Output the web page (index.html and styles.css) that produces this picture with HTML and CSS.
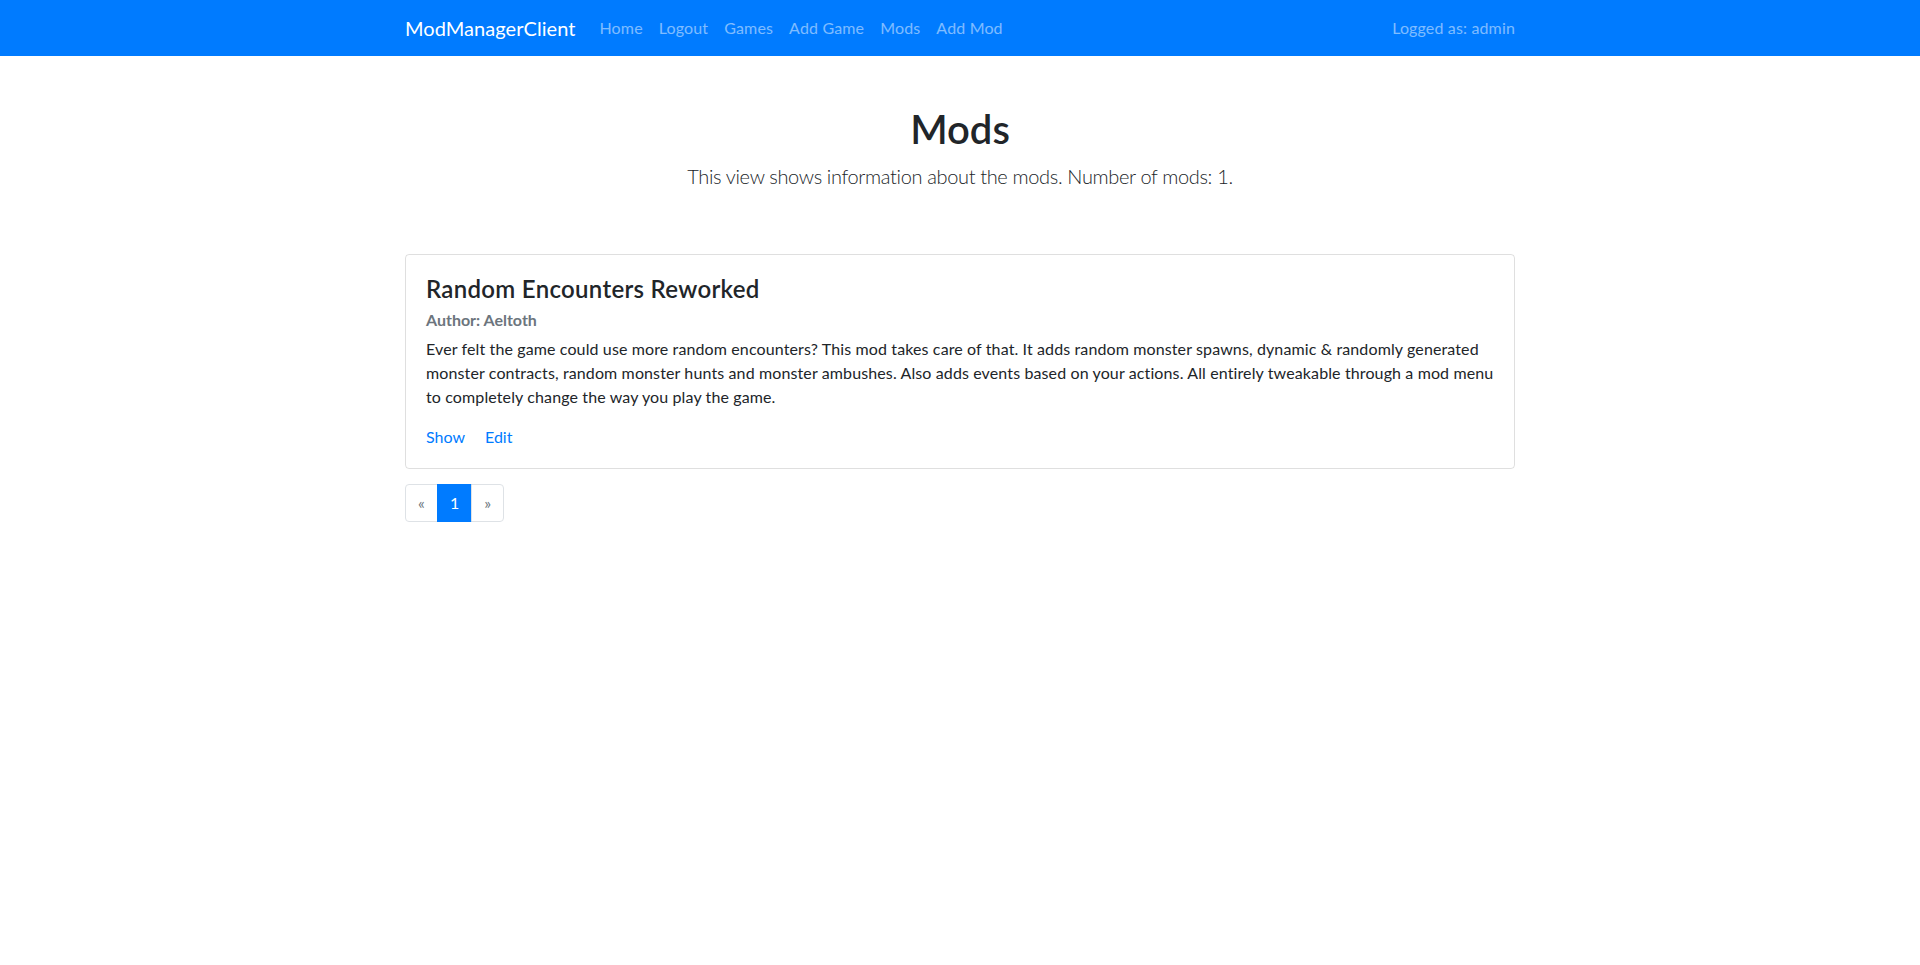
FILE: index.html
```html
<!DOCTYPE html>
<html lang="en">
<head>
<meta charset="utf-8">
<title>Mods - ModManagerClient</title>
<link rel="stylesheet" href="styles.css">
</head>
<body>
<nav class="navbar">
  <div class="container nav-inner">
    <a class="brand" href="#">ModManagerClient</a>
    <ul class="nav-links">
      <li><a href="#">Home</a></li>
      <li><a href="#">Logout</a></li>
      <li><a href="#">Games</a></li>
      <li><a href="#">Add Game</a></li>
      <li><a href="#">Mods</a></li>
      <li><a href="#">Add Mod</a></li>
    </ul>
    <span class="nav-text">Logged as: admin</span>
  </div>
</nav>
<main class="container">
  <header class="page-head">
    <h1 class="page-title">Mods</h1>
    <p class="lead">This view shows information about the mods. Number of mods: 1.</p>
  </header>
  <div class="card">
    <div class="card-body">
      <h4 class="card-title">Random Encounters Reworked</h4>
      <h6 class="card-subtitle">Author: Aeltoth</h6>
      <p class="card-text">Ever felt the game could use more random encounters? This mod takes care of that. It adds random monster spawns, dynamic &amp; randomly generated monster contracts, random monster hunts and monster ambushes. Also adds events based on your actions. All entirely tweakable through a mod menu to completely change the way you play the game.</p>
      <div class="card-links">
        <a href="#" class="card-link">Show</a>
        <a href="#" class="card-link">Edit</a>
      </div>
    </div>
  </div>
  <ul class="pagination">
    <li class="page-item disabled"><span class="page-link">&laquo;</span></li>
    <li class="page-item active"><span class="page-link">1</span></li>
    <li class="page-item disabled"><span class="page-link">&raquo;</span></li>
  </ul>
</main>
</body>
</html>
```
FILE: styles.css
```css
* { box-sizing: border-box; }
html, body { margin: 0; padding: 0; }
body {
  font-family: Lato, "Liberation Sans", sans-serif;
  font-size: 16px;
  line-height: 1.5;
  color: #212529;
  background: #fff;
}
a { text-decoration: none; }
.container {
  width: 1140px;
  margin: 0 auto;
  padding: 0 15px;
}
.navbar {
  background: #007bff;
  height: 56px;
}
.nav-inner {
  display: flex;
  align-items: center;
  height: 56px;
}
.brand {
  color: #fff;
  font-size: 20px;
  line-height: 30px;
  margin-right: 16px;
  letter-spacing: 0.05px;
}
.nav-links {
  display: flex;
  list-style: none;
  margin: 0;
  padding: 0;
  flex: 1;
}
.nav-links a {
  display: block;
  padding: 8px 8px;
  color: rgba(255,255,255,.5);
  letter-spacing: 0.15px;
}
.nav-text {
  color: rgba(255,255,255,.5);
  padding: 8px 0;
  letter-spacing: 0.15px;
}
.page-head {
  text-align: center;
  padding-top: 49px;
  padding-bottom: 63px;
}
.page-title {
  font-size: 40px;
  font-weight: 600;
  line-height: 1.2;
  margin: 0 0 8px;
}
.lead {
  font-size: 20px;
  font-weight: 300;
  margin: 0;
  letter-spacing: -0.35px;
}
.card {
  border: 1px solid rgba(0,0,0,.125);
  border-radius: 4px;
  margin-bottom: 15px;
}
.card-body { padding: 20px 20px 19px; }
.card-title {
  font-size: 24px;
  font-weight: 600;
  line-height: 1.2;
  margin: 0 0 12px;
  letter-spacing: 0.3px;
}
.card-subtitle {
  font-size: 16px;
  font-weight: 700;
  line-height: 1.2;
  color: #6c757d;
  margin: -6px 0 8px;
}
.card-text { margin: 0 0 16px; letter-spacing: 0.12px; }
.card-links { display: flex; gap: 20px; }
.card-link { color: #007bff; }
.pagination {
  display: flex;
  list-style: none;
  margin: 0;
  padding: 0;
}
.page-link {
  display: block;
  padding: 8px 12px;
  line-height: 20px;
  border: 1px solid #dee2e6;
  margin-left: -1px;
  color: #6c757d;
  background: #fff;
}
.page-item:first-child .page-link { margin-left: 0; border-radius: 4px 0 0 4px; }
.page-item:last-child .page-link { border-radius: 0 4px 4px 0; }
.page-item.active .page-link {
  background: #007bff;
  border-color: #007bff;
  color: #fff;
}
```
